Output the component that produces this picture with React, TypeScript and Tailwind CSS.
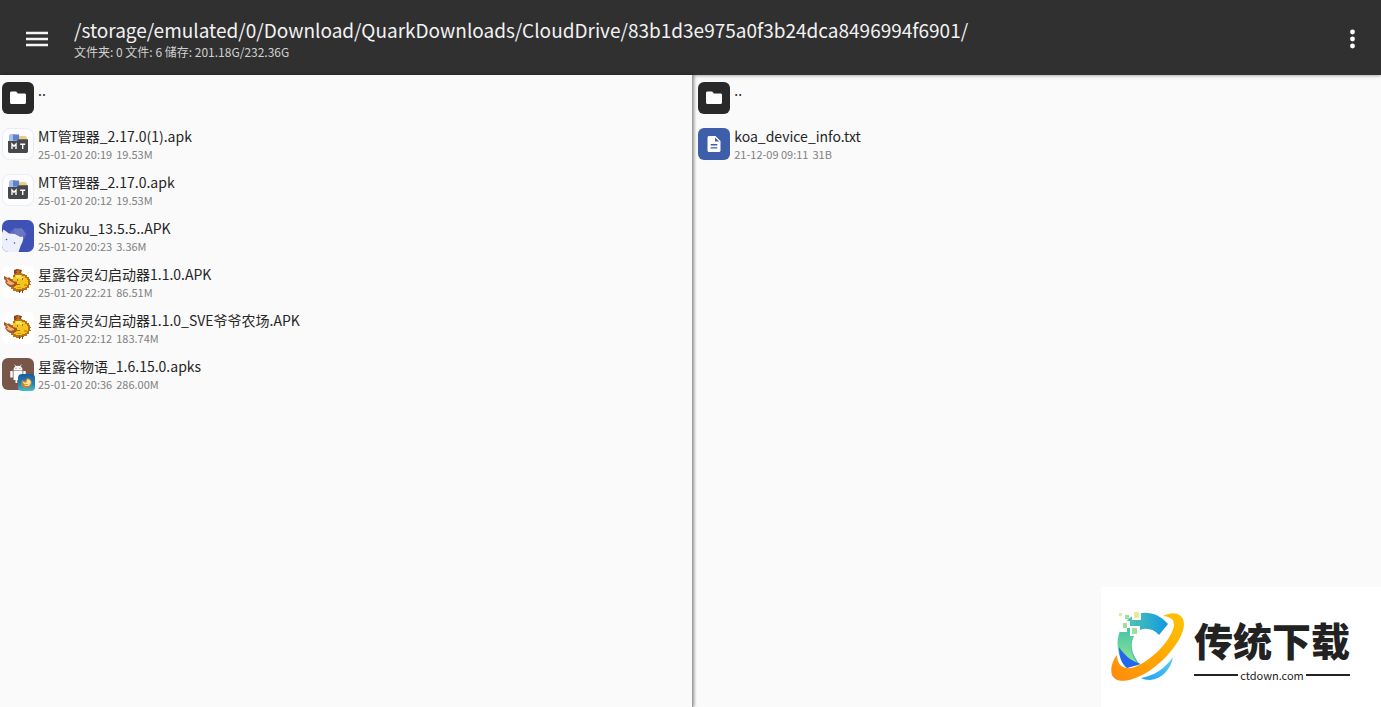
import React from 'react';

type IconKind = 'folder' | 'mt' | 'shizuku' | 'chicken' | 'apks' | 'text';

interface FileEntry {
  name: string;
  icon: IconKind;
  date?: string;
  size?: string;
}

const leftFiles: FileEntry[] = [
  { name: '..', icon: 'folder' },
  { name: 'MT管理器_2.17.0(1).apk', icon: 'mt', date: '25-01-20 20:19', size: '19.53M' },
  { name: 'MT管理器_2.17.0.apk', icon: 'mt', date: '25-01-20 20:12', size: '19.53M' },
  { name: 'Shizuku_13.5.5..APK', icon: 'shizuku', date: '25-01-20 20:23', size: '3.36M' },
  { name: '星露谷灵幻启动器1.1.0.APK', icon: 'chicken', date: '25-01-20 22:21', size: '86.51M' },
  { name: '星露谷灵幻启动器1.1.0_SVE爷爷农场.APK', icon: 'chicken', date: '25-01-20 22:12', size: '183.74M' },
  { name: '星露谷物语_1.6.15.0.apks', icon: 'apks', date: '25-01-20 20:36', size: '286.00M' },
];

const rightFiles: FileEntry[] = [
  { name: '..', icon: 'folder' },
  { name: 'koa_device_info.txt', icon: 'text', date: '21-12-09 09:11', size: '31B' },
];

const FolderIcon = () => (
  <svg viewBox="0 0 32 32" className="size-8">
    <rect width="32" height="32" rx="6" fill="#292929" />
    <path
      d="M9.5 9.6h4.7l1.7 1.8h6.6c.9 0 1.5.6 1.5 1.5v7.6c0 .9-.6 1.5-1.5 1.5h-13c-.9 0-1.5-.6-1.5-1.5v-9.400c0-.9.6-1.500 1.500-1.500z"
      fill="#fff"
    />
  </svg>
);

const TextIcon = () => (
  <svg viewBox="0 0 32 32" className="size-8">
    <rect width="32" height="32" rx="6" fill="#3f5ea9" />
    <path
      fillRule="evenodd"
      d="M11 8h6.500l5 5v9.500c0 .9-.6 1.500-1.500 1.500H11c-.9 0-1.500-.6-1.500-1.500v-13C9.500 8.600 10.100 8 11 8zm6 1.400v4.200h4.200zM12.700 16v1.400h6.600V16zm0 3.200v1.400h6.600v-1.400z"
      fill="#fff"
    />
  </svg>
);

const MtIcon = () => (
  <svg viewBox="0 0 32 32" className="size-8">
    <rect x=".5" y=".5" width="31" height="31" rx="7" fill="#fdfdff" stroke="#e9ebf5" />
    <path d="M7 8.500c0-1.500.8-2.500 2.300-2.500h3.200l2 1.500h3V16H7z" fill="#a9bfe6" />
    <path d="M11 6.500h6v6h-6z" fill="#5b82cc" />
    <path d="M17 8h5.500c1.400 0 2.500.9 2.500 2.200V15h-8z" fill="#e8cd8c" />
    <path d="M6 13h8.500l2.500-1.800h9v12.100c0 1-.7 1.700-1.700 1.700H7.700c-1 0-1.700-.7-1.700-1.700z" fill="#46484a" />
    <path
      d="M10 21v-5l2 2.200 2-2.200v5M18.200 16.300h5M20.700 16.300V21"
      fill="none"
      stroke="#fff"
      strokeWidth="1.400"
    />
  </svg>
);

const ShizukuIcon = () => (
  <svg viewBox="0 0 32 32" className="size-8">
    <defs>
      <clipPath id="shizuku-clip">
        <rect width="32" height="32" rx="6.500" />
      </clipPath>
    </defs>
    <g clipPath="url(#shizuku-clip)">
      <rect width="32" height="32" fill="#4051b5" />
      <path d="M8 12l4-3.500h8l4.500 5.500-3 6-3 1-8-5z" fill="#5c6bc0" />
      <path d="M12 8.500h8l3.500 5-3.500 3-7-3z" fill="#6a78c6" />
      <path d="M0 13l1.500-3.500 5.500 4 6 .5 5.500 3 2.500-.5c.5 3-.5 6-2 8.500L16.500 32H0z" fill="#edf0fc" />
      <circle cx="4.500" cy="19.500" r=".8" fill="#4051b5" />
      <circle cx="12.500" cy="23" r=".8" fill="#4051b5" />
    </g>
  </svg>
);

const Chicken = () => (
  <>
    <path d="M12 4l3-1 5 1-1 3 2 1-2 2h-6l-1-3z" fill="#8d401a" />
    <path d="M14 5l3-1 1 2-2 2z" fill="#c66b2a" />
    <path
      d="M12 8h2V7h6v1h3v1h2v2h2v2h1v2h1v1h-1v2h1v1h-2v3h-2v2h-3v1h-3v1h-5v-1h-3v-2h-2v-3H8v-4h1v-3h2V9h1z"
      fill="#b8741a"
    />
    <path d="M13 9h7v1h3v2h2v2h1v5h-1v2h-2v1h-3v1h-6v-1h-2v-2H9v-5h2v-4h2z" fill="#f4c51d" />
    <path d="M14 9h5v2h2v2h-3v-1h-4z" fill="#fbe257" />
    <path d="M2 10l4 2 1-1 4 4 4 1v3l-3 2H8l-3-2-2-3 1-1-2-2z" fill="#a75727" />
    <path d="M4 12l3 2 1 1 4 2v1l-3 1-3-1-2-2h2z" fill="#f4b173" />
    <path d="M15 13h1v2h-1zM20 12h1v2h-1zM14 18h4v1h-4z" fill="#ad690f" />
    <path d="M22 18h3v2h-3zM15 21h4v1h-4z" fill="#dc9613" />
    <path d="M17 24h1v3h-1zM20 24h1v3h-1z" fill="#874217" />
  </>
);

const ChickenIcon = () => (
  <svg viewBox="0 0 32 32" className="size-8">
    <rect width="32" height="32" rx="6" fill="#fff" />
    <Chicken />
  </svg>
);

const ApksIcon = () => (
  <svg viewBox="0 0 32 32" className="size-8 overflow-visible">
    <rect width="32" height="32" rx="6" fill="#78564a" />
    <path d="M11.500 12c0-2.700 1.800-4.300 4.500-4.300s4.500 1.600 4.500 4.300z" fill="#fff" />
    <path d="M12.700 6.700l1.500 2.300M19.300 6.700L17.800 9" stroke="#fff" strokeWidth=".8" />
    <path
      d="M11.500 12.500h9v9.500h-2v3h-1.800v-3h-1.400v3h-1.800v-3h-2zM8.300 13h2.400v6.500H8.300zM21.300 13h2.400v6.500h-2.400z"
      fill="#fff"
    />
    <circle cx="14" cy="10.300" r=".5" fill="#78564a" />
    <circle cx="18" cy="10.300" r=".5" fill="#78564a" />
    <defs>
      <linearGradient id="badge" x1="0" y1="0" x2="0" y2="1">
        <stop offset="0" stopColor="#185d9e" />
        <stop offset=".6" stopColor="#2583b9" />
        <stop offset="1" stopColor="#49c2c5" />
      </linearGradient>
    </defs>
    <rect x="16" y="16" width="17" height="17" rx="4" fill="url(#badge)" />
    <path d="M20 22l3 1 2-3 3 1 2 3-1 4-3 2h-4l-3-3z" fill="#b98437" />
    <path d="M20.500 23.500L24 25l1.500-4 2.500 1 1 2.500-2 3.500h-4z" fill="#ffe39a" />
    <path d="M22 26h4v1h-4z" fill="#e2a437" />
  </svg>
);

const icons: Record<IconKind, React.FC> = {
  folder: FolderIcon,
  mt: MtIcon,
  shizuku: ShizukuIcon,
  chicken: ChickenIcon,
  apks: ApksIcon,
  text: TextIcon,
};

const FileRow: React.FC<{ file: FileEntry }> = ({ file }) => {
  const Icon = icons[file.icon];
  return (
    <li>
      <button type="button" className="flex h-[46px] w-full items-center gap-1 text-left">
        <span className="shrink-0">
          <Icon />
        </span>
        <span className="flex h-9 flex-col">
          <span className="text-[14px] leading-5 text-[#262626]">{file.name}</span>
          {file.date && (
            <span className="flex gap-1 text-[11px] leading-4 text-[#808080]">
              <span>{file.date}</span>
              <span>{file.size}</span>
            </span>
          )}
        </span>
      </button>
    </li>
  );
};

const SiteLogo = () => (
  <svg viewBox="0 0 76 72" className="h-[72px] w-[76px]">
    <defs>
      <linearGradient id="ring" x1="0" y1="1" x2="1" y2="0">
        <stop offset="0" stopColor="#ff8a0b" />
        <stop offset="1" stopColor="#ffc400" />
      </linearGradient>
      <linearGradient id="arc-top" x1="0" y1="0" x2="1" y2="0">
        <stop offset="0" stopColor="#5fd0a0" />
        <stop offset="1" stopColor="#1098e4" />
      </linearGradient>
      <linearGradient id="arc-left" x1="0" y1="0" x2="0" y2="1">
        <stop offset="0" stopColor="#3bbdaf" />
        <stop offset="1" stopColor="#9aec8b" />
      </linearGradient>
      <linearGradient id="arc-bottom" x1="0" y1="1" x2="1" y2="0">
        <stop offset="0" stopColor="#20a0f0" />
        <stop offset="1" stopColor="#58d0f2" />
      </linearGradient>
    </defs>
    <path d="M24 4C35-1 49 2 58 13l-9 11c-7-8-18-8-24-1-4 6-5 16 1 25l3 5-12 2C5 43 5 15 24 4z" fill="url(#arc-top)" />
    <path d="M15 12C4 25 6 43 16 57l13-3c-9-9-11-22-4-31l-4-9z" fill="url(#arc-left)" />
    <path d="M9 36c0 9 2 16 8 21l14-4C21 50 14 44 9 36z" fill="#2265ef" />
    <path d="M31 67c12-2 24-9 32-21-2 12-11 22-23 23-4 0-7-1-9-2z" fill="url(#arc-bottom)" />
    <path
      d="M53 5c11-6 21-2 21 8 0 14-18 37-38 49C20 71 6 73 2 64c-2-6 0-14 5-20 0 9 5 14 14 13 13-2 33-20 40-34 6-11 3-17-8-18z"
      fill="url(#ring)"
    />
    <path d="M13 10h7v7h-7zM10 13h7v8h-7zM22 0h9v9h-9zM20 15h10v10H20z" fill="#fff" />
    <path d="M9 2h3v3H9zM24 1h5v6h-5z" fill="#e5e998" />
    <path d="M15 4h4v4h-4zM13 12h4v5h-4zM22 17h5v6h-5z" fill="#9edf9d" />
  </svg>
);

const App: React.FC = () => {
  return (
    <div className="relative flex min-h-screen flex-col bg-[#fafafa] font-['Noto_Sans_CJK_SC','Noto_Sans',sans-serif]">
      <header className="z-10 flex h-[75px] shrink-0 items-center bg-[#303030] pr-4 pl-[25px] text-white shadow-[0_1px_3px_rgba(0,0,0,0.3)]">
        <button type="button" aria-label="菜单" className="mt-[2px] shrink-0">
          <svg viewBox="0 0 24 18" className="h-[18px] w-6">
            <path d="M1 3h22M1 9h22M1 15h22" stroke="#f5f5f5" strokeWidth="2.600" />
          </svg>
        </button>
        <div className="ml-[25px] min-w-0 flex-1">
          <h1 className="truncate text-[19px] leading-7 text-[#f2f2f2]">
            /storage/emulated/0/Download/QuarkDownloads/CloudDrive/83b1d3e975a0f3b24dca8496994f6901/
          </h1>
          <p className="text-[12px] leading-4 text-[#d0d0d0]">文件夹: 0 文件: 6 储存: 201.18G/232.36G</p>
        </div>
        <button type="button" aria-label="更多" className="mt-[2px] shrink-0">
          <svg viewBox="0 0 24 24" className="size-6" fill="#fff">
            <circle cx="11.500" cy="5" r="2.400" />
            <circle cx="11.500" cy="12" r="2.400" />
            <circle cx="11.500" cy="19" r="2.400" />
          </svg>
        </button>
      </header>

      <main className="flex flex-1">
        <ul className="z-20 w-[50.2%] border-r border-[#a0a0a0] bg-[#fafafa] pl-[2px] shadow-[1px_0_3px_rgba(0,0,0,0.45)]">
          {leftFiles.map((file) => (
            <FileRow key={file.name} file={file} />
          ))}
        </ul>
        <ul className="flex-1 pl-[5px]">
          {rightFiles.map((file) => (
            <FileRow key={file.name} file={file} />
          ))}
        </ul>
      </main>

      <a
        href="#ctdown"
        className="absolute right-0 bottom-0 z-30 flex h-[120px] w-[280px] items-center gap-2 bg-white pl-[9px] text-[#222]"
      >
        <SiteLogo />
        <span className="flex flex-col">
          <span className="text-[39px] leading-[56px] font-black">传统下载</span>
          <span className="flex items-center gap-[2px] text-[11px] leading-4">
            <span className="h-[2px] flex-1 bg-[#222]" />
            ctdown.com
            <span className="h-[2px] flex-1 bg-[#222]" />
          </span>
        </span>
      </a>
    </div>
  );
};

export default App;
